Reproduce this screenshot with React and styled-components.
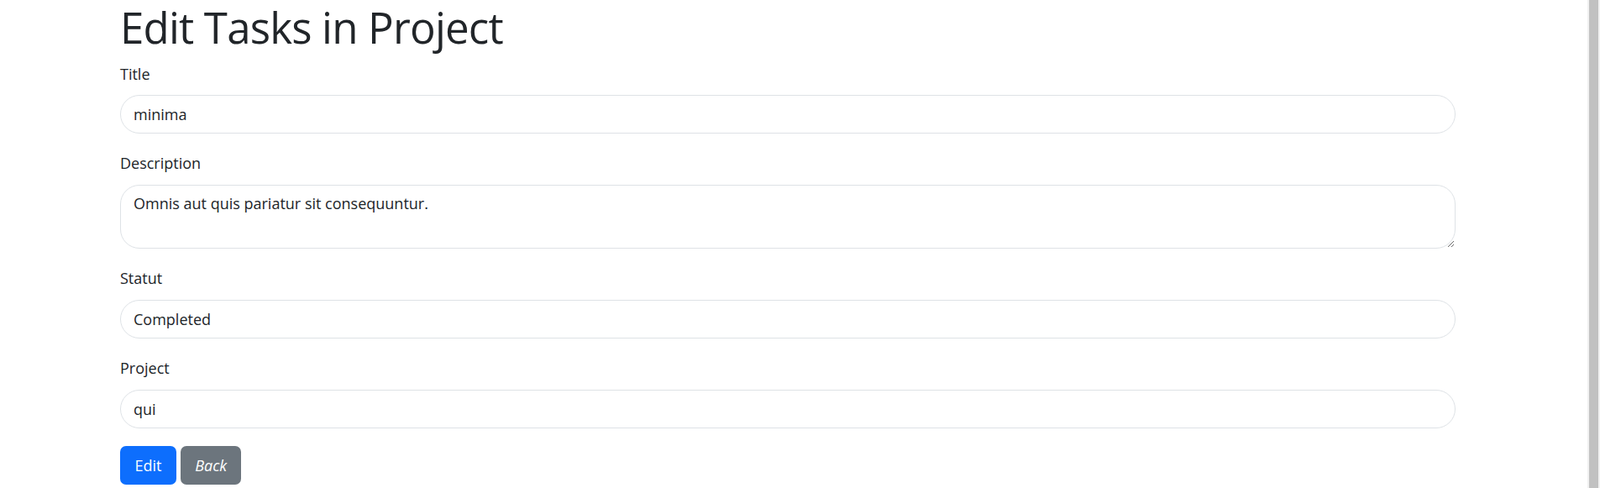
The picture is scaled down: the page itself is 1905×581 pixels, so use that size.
import React from 'react';
import styled, { createGlobalStyle } from 'styled-components';

const GlobalStyle = createGlobalStyle`
    html, body {
        margin: 0;
        padding: 0;
        background: #ffffff;
    }

    body {
        font-family: "Open Sans", "Noto Sans", sans-serif;
        color: #212529;
        overflow: hidden;
    }
`

const Screen = styled.div`
    display: flex;
    height: 581px;
    overflow: hidden;
`

const Main = styled.main`
    flex: 1;
    padding-left: 143px;
`

const Scrollbar = styled.div`
    width: 15px;
    background-color: #f1f1f1;
    display: flex;
    justify-content: center;

    .thumb {
        width: 11px;
        background-color: #c1c1c1;
    }
`

const Form = styled.form`
    width: 1590px;

    h1 {
        font-size: 51px;
        font-weight: 400;
        letter-spacing: -0.8px;
        line-height: 56px;
        margin: 0 0 13.4px;
        padding-top: 4.2px;
    }
`

const Group = styled.div`
    margin-bottom: 21.3px;

    label {
        display: block;
        font-size: 18px;
        line-height: 29px;
        margin-bottom: 10.6px;
    }
`

const Field = styled.input`
    display: block;
    box-sizing: border-box;
    width: 100%;
    height: 46px;
    padding: 0 15px;
    font-family: inherit;
    font-size: 18px;
    color: #212529;
    border: 1.2px solid #dee2e6;
    border-radius: 23px;
    outline: none;
`

const Area = styled.textarea`
    display: block;
    box-sizing: border-box;
    width: 100%;
    height: 76px;
    padding: 7.2px 15px;
    font-family: inherit;
    font-size: 18px;
    line-height: 28.8px;
    color: #212529;
    border: 1.2px solid #dee2e6;
    border-radius: 23px;
    outline: none;
    resize: vertical;
`

const Actions = styled.div`
    display: flex;
    gap: 5px;
`

const Button = styled.button`
    height: 46px;
    padding: 0 17.4px;
    font-family: inherit;
    font-size: 18px;
    font-style: ${props => props.italic ? 'italic' : 'normal'};
    color: #ffffff;
    background-color: ${props => props.color};
    border: none;
    border-radius: 7px;
`

const App = () => {

    return (
        <Screen>
            <GlobalStyle />
            <Main>
                <Form>
                    <h1>Edit Tasks in Project</h1>
                    <Group>
                        <label>Title</label>
                        <Field defaultValue='minima' />
                    </Group>
                    <Group>
                        <label>Description</label>
                        <Area defaultValue='Omnis aut quis pariatur sit consequuntur.' />
                    </Group>
                    <Group>
                        <label>Statut</label>
                        <Field defaultValue='Completed' />
                    </Group>
                    <Group>
                        <label>Project</label>
                        <Field defaultValue='qui' />
                    </Group>
                    <Actions>
                        <Button type='button' color='#0d6efd'>Edit</Button>
                        <Button type='button' color='#6c757d' italic>Back</Button>
                    </Actions>
                </Form>
            </Main>
            <Scrollbar>
                <div className='thumb' />
            </Scrollbar>
        </Screen>
    );
};

export default App;
